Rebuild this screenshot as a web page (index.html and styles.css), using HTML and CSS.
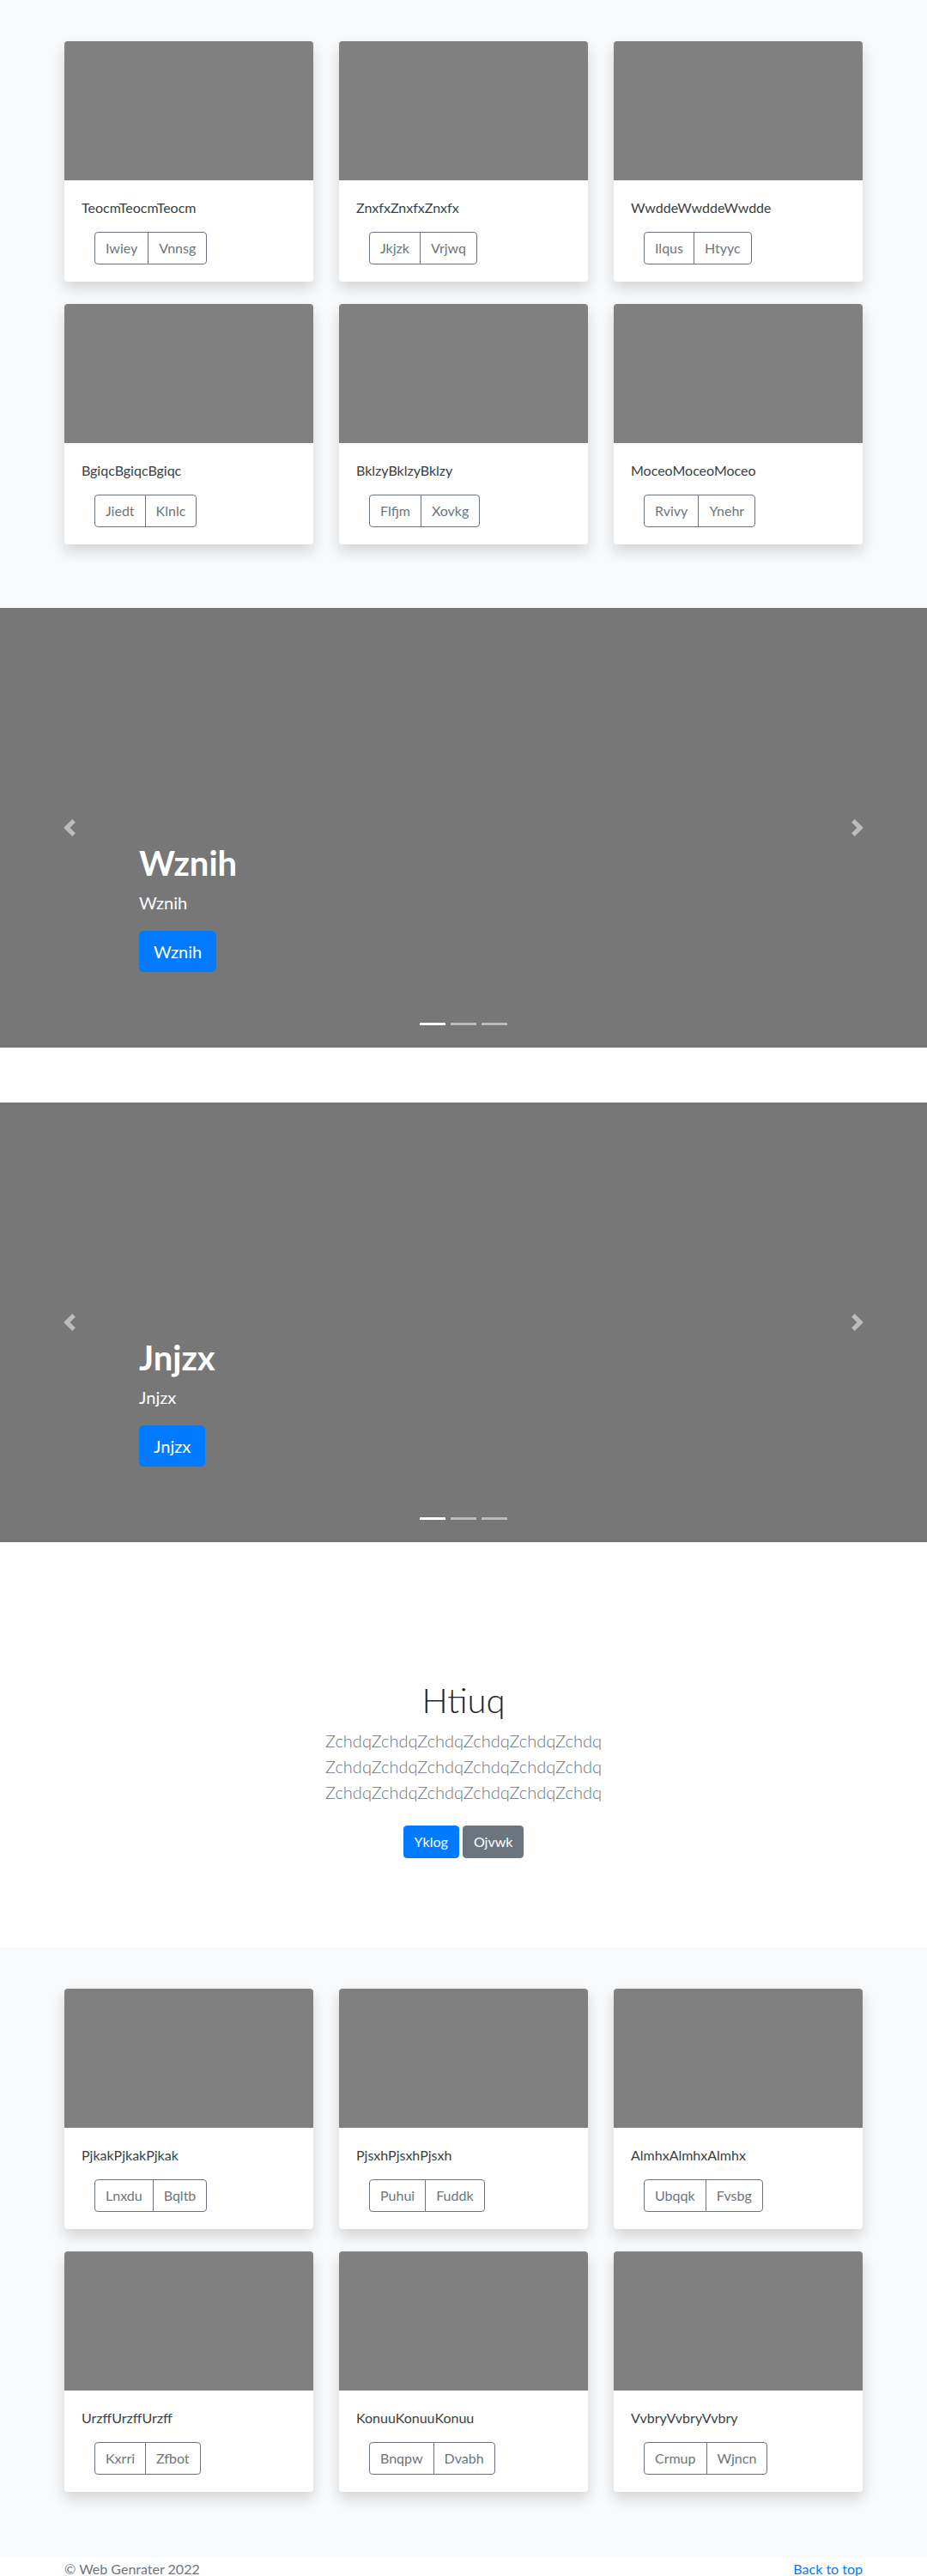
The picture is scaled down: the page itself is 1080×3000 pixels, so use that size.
FILE: index.html
```html
<!DOCTYPE html>
<html lang="en">
<head>
<meta charset="utf-8">
<title>Album</title>
<link rel="stylesheet" href="styles.css">
</head>
<body>
<main>
  <section class="album">
    <div class="container grid">
      <div class="card"><div class="card-img"></div><div class="card-body"><p class="card-text">TeocmTeocmTeocm</p><div class="btn-group"><a class="btn-out">Iwiey</a><a class="btn-out">Vnnsg</a></div></div></div>
      <div class="card"><div class="card-img"></div><div class="card-body"><p class="card-text">ZnxfxZnxfxZnxfx</p><div class="btn-group"><a class="btn-out">Jkjzk</a><a class="btn-out">Vrjwq</a></div></div></div>
      <div class="card"><div class="card-img"></div><div class="card-body"><p class="card-text">WwddeWwddeWwdde</p><div class="btn-group"><a class="btn-out">Ilqus</a><a class="btn-out">Htyyc</a></div></div></div>
      <div class="card"><div class="card-img"></div><div class="card-body"><p class="card-text">BgiqcBgiqcBgiqc</p><div class="btn-group"><a class="btn-out">Jiedt</a><a class="btn-out">Klnlc</a></div></div></div>
      <div class="card"><div class="card-img"></div><div class="card-body"><p class="card-text">BklzyBklzyBklzy</p><div class="btn-group"><a class="btn-out">Flfjm</a><a class="btn-out">Xovkg</a></div></div></div>
      <div class="card"><div class="card-img"></div><div class="card-body"><p class="card-text">MoceoMoceoMoceo</p><div class="btn-group"><a class="btn-out">Rvivy</a><a class="btn-out">Ynehr</a></div></div></div>
    </div>
  </section>

  <section class="carousel">
    <div class="caption">
      <h1>Wznih</h1>
      <p class="cap-text">Wznih</p>
      <p class="cap-btn"><a class="btn-lg">Wznih</a></p>
    </div>
    <a class="ctrl ctrl-prev"><svg width="20" height="20" viewBox="0 0 8 8"><path fill="#fff" d="M5.25 0l-4 4 4 4 1.5-1.5L4.25 4l2.5-2.5L5.25 0z"/></svg></a>
    <a class="ctrl ctrl-next"><svg width="20" height="20" viewBox="0 0 8 8"><path fill="#fff" d="M2.75 0l-1.5 1.5L3.75 4l-2.5 2.5L2.75 8l4-4-4-4z"/></svg></a>
    <ol class="indicators"><li class="active"></li><li></li><li></li></ol>
  </section>

  <section class="carousel">
    <div class="caption">
      <h1>Jnjzx</h1>
      <p class="cap-text">Jnjzx</p>
      <p class="cap-btn"><a class="btn-lg">Jnjzx</a></p>
    </div>
    <a class="ctrl ctrl-prev"><svg width="20" height="20" viewBox="0 0 8 8"><path fill="#fff" d="M5.25 0l-4 4 4 4 1.5-1.5L4.25 4l2.5-2.5L5.25 0z"/></svg></a>
    <a class="ctrl ctrl-next"><svg width="20" height="20" viewBox="0 0 8 8"><path fill="#fff" d="M2.75 0l-1.5 1.5L3.75 4l-2.5 2.5L2.75 8l4-4-4-4z"/></svg></a>
    <ol class="indicators"><li class="active"></li><li></li><li></li></ol>
  </section>

  <section class="jumbotron">
    <div class="jumbo-inner">
      <h1 class="jumbo-heading">Htiuq</h1>
      <p class="lead">ZchdqZchdqZchdqZchdqZchdqZchdq ZchdqZchdqZchdqZchdqZchdqZchdq ZchdqZchdqZchdqZchdqZchdqZchdq</p>
      <p class="actions"><a class="btn btn-primary">Yklog</a> <a class="btn btn-secondary">Ojvwk</a></p>
    </div>
  </section>

  <section class="album album-last">
    <div class="container grid">
      <div class="card"><div class="card-img"></div><div class="card-body"><p class="card-text">PjkakPjkakPjkak</p><div class="btn-group"><a class="btn-out">Lnxdu</a><a class="btn-out">Bqltb</a></div></div></div>
      <div class="card"><div class="card-img"></div><div class="card-body"><p class="card-text">PjsxhPjsxhPjsxh</p><div class="btn-group"><a class="btn-out">Puhui</a><a class="btn-out">Fuddk</a></div></div></div>
      <div class="card"><div class="card-img"></div><div class="card-body"><p class="card-text">AlmhxAlmhxAlmhx</p><div class="btn-group"><a class="btn-out">Ubqqk</a><a class="btn-out">Fvsbg</a></div></div></div>
      <div class="card"><div class="card-img"></div><div class="card-body"><p class="card-text">UrzffUrzffUrzff</p><div class="btn-group"><a class="btn-out">Kxrri</a><a class="btn-out">Zfbot</a></div></div></div>
      <div class="card"><div class="card-img"></div><div class="card-body"><p class="card-text">KonuuKonuuKonuu</p><div class="btn-group"><a class="btn-out">Bnqpw</a><a class="btn-out">Dvabh</a></div></div></div>
      <div class="card"><div class="card-img"></div><div class="card-body"><p class="card-text">VvbryVvbryVvbry</p><div class="btn-group"><a class="btn-out">Crmup</a><a class="btn-out">Wjncn</a></div></div></div>
    </div>
  </section>
</main>

<footer class="footer">
  <div class="container footer-row">
    <p class="copy">© Web Genrater 2022</p>
    <p class="top-link"><a href="#">Back to top</a></p>
  </div>
</footer>
</body>
</html>
```

FILE: styles.css
```css
* { box-sizing: border-box; }

html, body {
  margin: 0;
  padding: 0;
}

body {
  font-family: Lato, "Liberation Sans", sans-serif;
  font-size: 16px;
  line-height: 1.5;
  color: #212529;
  background: #fff;
}

p { margin: 0; }
h1 { margin: 0; }

.container {
  max-width: 960px;
  margin: 0 auto;
  padding: 0 15px;
}

/* Album */
.album {
  background: #f8f9fa;
  padding: 48px 0 48px;
}

.album-last {
  padding-bottom: 50px;
}

.grid {
  display: grid;
  grid-template-columns: repeat(3, 290px);
  column-gap: 30px;
}

.card {
  background: #fff;
  border-radius: 4px;
  overflow: hidden;
  box-shadow: 0 8px 16px rgba(0, 0, 0, 0.15);
  margin-bottom: 26px;
}

.card-img {
  height: 162px;
  background: #808080;
}

.card-body {
  padding: 20px;
}

.card-text {
  margin-bottom: 16px;
  color: #3a3f44;
}

.btn-group {
  display: inline-flex;
  margin-left: 15px;
}

.btn-out {
  display: inline-block;
  padding: 6px 12px;
  font-size: 16px;
  line-height: 24px;
  color: #6c757d;
  border: 1px solid #6c757d;
  background: transparent;
}

.btn-out:first-child {
  border-radius: 4px 0 0 4px;
}

.btn-out:last-child {
  border-radius: 0 4px 4px 0;
  margin-left: -1px;
}

/* Carousel */
.carousel {
  position: relative;
  height: 512px;
  background: #777;
  margin-bottom: 64px;
  display: flex;
  flex-direction: column;
  justify-content: flex-end;
  padding: 0 15% 88px;
  color: #fff;
}

.caption h1 {
  font-size: 40px;
  line-height: 48px;
  font-weight: 700;
  margin-bottom: 7px;
}

.cap-text {
  font-size: 20px;
  line-height: 30px;
  margin-bottom: 18px;
}

.btn-lg {
  display: inline-block;
  padding: 8px 16px;
  font-size: 20px;
  line-height: 30px;
  color: #fff;
  background: #007bff;
  border: 1px solid #007bff;
  border-radius: 5px;
}

.ctrl {
  position: absolute;
  top: 0;
  bottom: 0;
  width: 15%;
  display: flex;
  align-items: center;
  justify-content: center;
  opacity: 0.5;
}

.ctrl-prev { left: 0; }
.ctrl-next { right: 0; }

.indicators {
  position: absolute;
  left: 0;
  right: 0;
  bottom: 0;
  margin: 0 0 16px;
  padding: 0;
  list-style: none;
  display: flex;
  justify-content: center;
}

.indicators li {
  width: 30px;
  height: 3px;
  margin: 10px 3px;
  background: #fff;
  opacity: 0.5;
}

.indicators li.active {
  opacity: 1;
}

/* Jumbotron */
.jumbotron {
  padding: 96px 0 96px;
  text-align: center;
  background: #fff;
}

.jumbo-inner {
  max-width: 640px;
  margin: 0 auto;
  padding: 0 15px;
}

.jumbo-heading {
  font-size: 40px;
  line-height: 48px;
  font-weight: 300;
  color: #212529;
  margin-bottom: 8px;
}

.lead {
  font-size: 20px;
  line-height: 30px;
  font-weight: 300;
  color: #6c757d;
  margin-bottom: 16px;
}

.actions {
  margin: 0;
}

.btn {
  display: inline-block;
  padding: 6px 12px;
  font-size: 16px;
  line-height: 24px;
  color: #fff;
  border: 1px solid transparent;
  border-radius: 4px;
  margin: 8px 0;
}

.btn-primary {
  background: #007bff;
  border-color: #007bff;
}

.btn-secondary {
  background: #6c757d;
  border-color: #6c757d;
}

/* Footer */
.footer {
  padding: 2px 0 48px;
  color: #6c757d;
}

.footer-row {
  display: flex;
  justify-content: space-between;
}

.top-link a {
  color: #007bff;
  text-decoration: none;
}
```
